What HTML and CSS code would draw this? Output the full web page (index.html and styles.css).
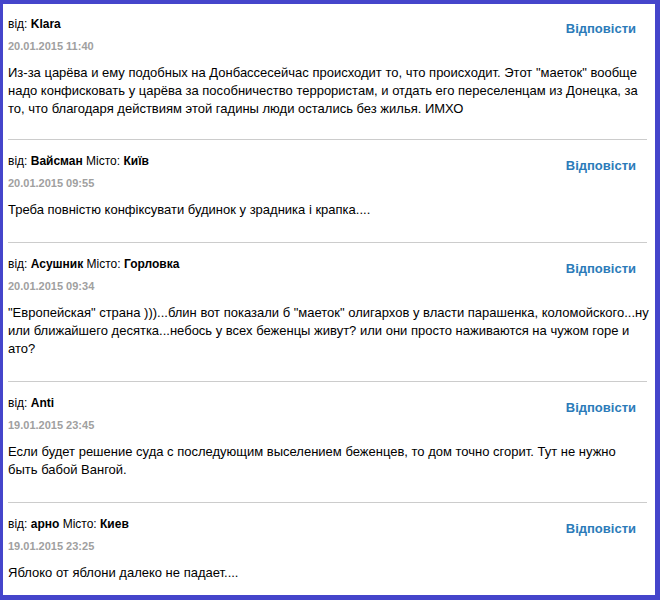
FILE: index.html
```html
<!DOCTYPE html>
<html lang="uk">
<head>
<meta charset="UTF-8">
<title>Коментарі</title>
<link rel="stylesheet" href="styles.css">
</head>
<body>

<div class="frame">
  <!-- Comments list -->
  <div class="comment">
    <div class="comment-head">
      <div>
        <div class="author">від: <b>Klara</b></div>
        <div class="date">20.01.2015 11:40</div>
      </div>
      <a class="reply" href="#">Відповісти</a>
    </div>
    <p class="text">Из-за царёва и ему подобных на Донбассесейчас происходит то, что происходит. Этот "маеток" вообще надо конфисковать у царёва за пособничество террористам, и отдать его переселенцам из Донецка, за то, что благодаря действиям этой гадины люди остались без жилья. ИМХО</p>
  </div>

  <div class="comment">
    <div class="comment-head">
      <div>
        <div class="author">від: <b>Вайсман</b> Місто: <b>Київ</b></div>
        <div class="date">20.01.2015 09:55</div>
      </div>
      <a class="reply" href="#">Відповісти</a>
    </div>
    <p class="text">Треба повністю конфіксувати будинок у зрадника і крапка....</p>
  </div>

  <div class="comment">
    <div class="comment-head">
      <div>
        <div class="author">від: <b>Асушник</b> Місто: <b>Горловка</b></div>
        <div class="date">20.01.2015 09:34</div>
      </div>
      <a class="reply" href="#">Відповісти</a>
    </div>
    <p class="text">"Европейская" страна )))...блин вот показали б "маеток" олигархов у власти парашенка, коломойского...ну или ближайшего десятка...небось у всех беженцы живут? или они просто наживаются на чужом горе и ато?</p>
  </div>

  <div class="comment">
    <div class="comment-head">
      <div>
        <div class="author">від: <b>Anti</b></div>
        <div class="date">19.01.2015 23:45</div>
      </div>
      <a class="reply" href="#">Відповісти</a>
    </div>
    <p class="text">Если будет решение суда с последующим выселением беженцев, то дом точно сгорит. Тут не нужно быть&nbsp;бабой Вангой.</p>
  </div>

  <div class="comment">
    <div class="comment-head">
      <div>
        <div class="author">від: <b>арно</b> Місто: <b>Киев</b></div>
        <div class="date">19.01.2015 23:25</div>
      </div>
      <a class="reply" href="#">Відповісти</a>
    </div>
    <p class="text">Яблоко от яблони далеко не падает....</p>
  </div>
</div>

</body>
</html>
```

FILE: styles.css
```css
/* General styles */
body {
  font-family: "Liberation Sans", Arial, sans-serif;
  margin: 0;
  padding: 0;
  background-color: #fff;
  color: #000;
}

.frame {
  box-sizing: border-box;
  height: 600px;
  overflow: hidden;
  border-style: solid;
  border-color: #4545cb;
  border-width: 4px 5px 5px 3px;
  padding: 0 8px 0 5px;
}

/* Comment block */
.comment {
  padding: 13px 0 23px;
  border-bottom: 1px solid #ccc;
}

.comment:first-child {
  padding-top: 12px;
  padding-bottom: 21px;
}

.comment:last-child {
  border-bottom: none;
}

.comment-head {
  display: flex;
  justify-content: space-between;
  align-items: flex-start;
}

.author {
  font-size: 12px;
  line-height: 16px;
}

.date {
  margin-top: 6px;
  font-size: 11px;
  font-weight: bold;
  line-height: 16px;
  color: #a0a0a0;
}

.reply {
  margin: 4px 11px 0 0;
  font-size: 13px;
  font-weight: bold;
  line-height: 18px;
  color: #2b7bb9;
  text-decoration: none;
}

.text {
  margin: 10px -2px 0 0;
  font-size: 13px;
  line-height: 18px;
}
```
